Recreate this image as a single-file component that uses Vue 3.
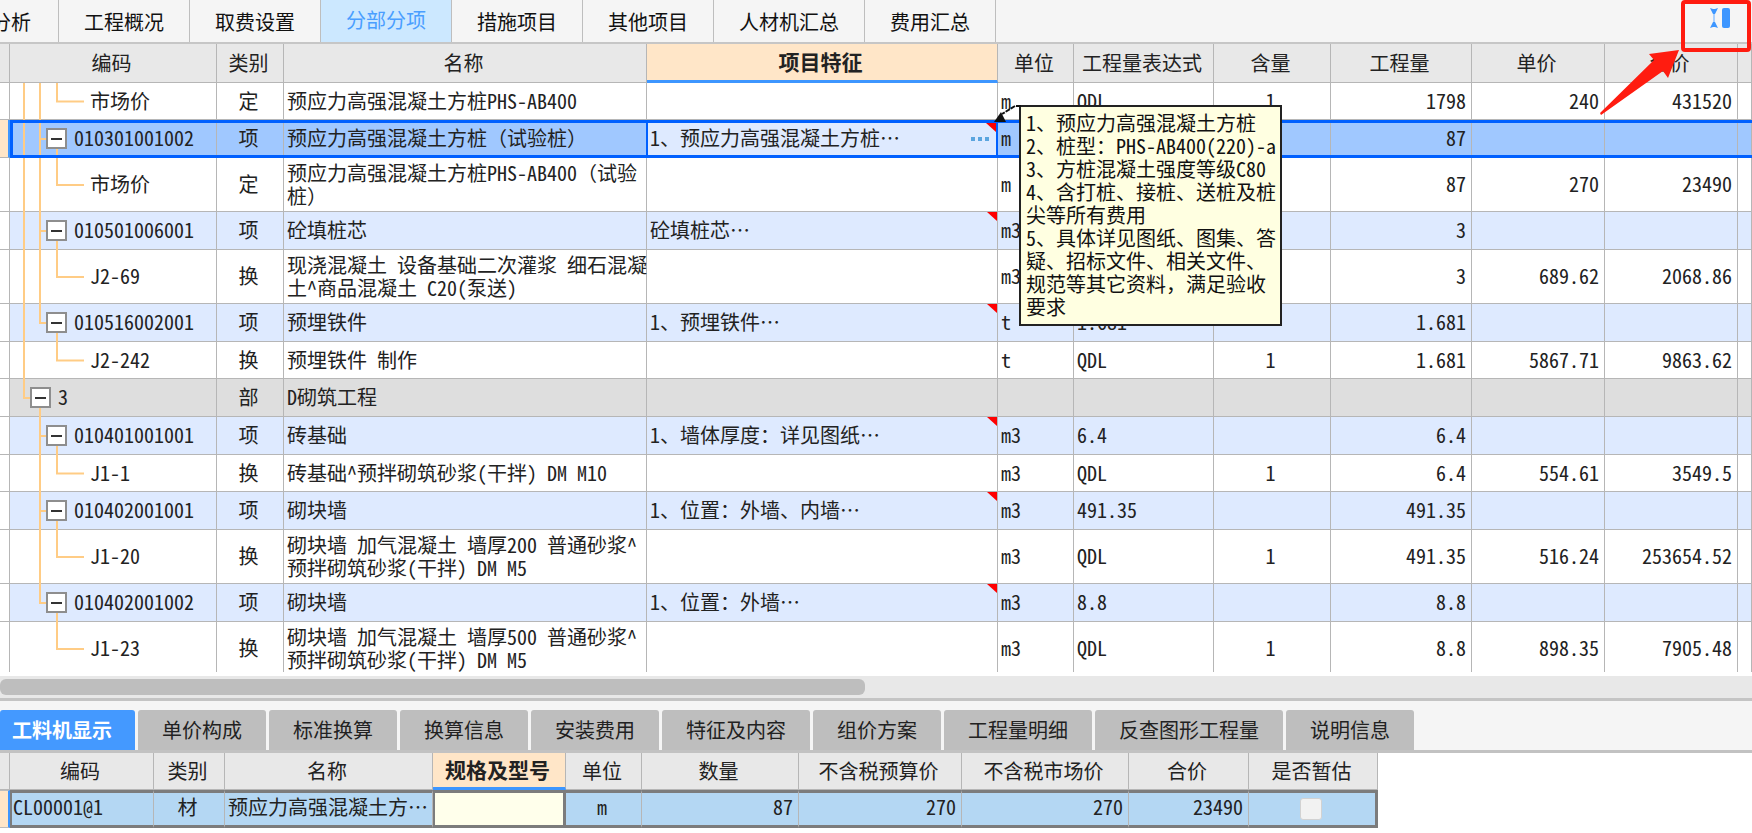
<script setup>
import { ref } from 'vue'

const topTabs = ['工程概况', '取费设置', '分部分项', '措施项目', '其他项目', '人材机汇总', '费用汇总']
const activeTop = ref('分部分项')

const columns = [
  { label: '编码', cls: 'w-code' },
  { label: '类别', cls: 'w-kind' },
  { label: '名称', cls: 'w-name' },
  { label: '项目特征', cls: 'w-feature', focus: true },
  { label: '单位', cls: 'w-unit' },
  { label: '工程量表达式', cls: 'w-expr' },
  { label: '含量', cls: 'w-ratio' },
  { label: '工程量', cls: 'w-qty' },
  { label: '单价', cls: 'w-price' },
  { label: '合价', cls: 'w-total' },
]

// a / b: state of the two outer tree guides ('full', 'end', 'start' or none)
const rows = [
  { type: 'leaf', a: 'full', b: 'full', code: '市场价', kind: '定', name: '预应力高强混凝土方桩PHS-AB400', unit: 'm', expr: 'QDL', ratio: '1', qty: '1798', price: '240', total: '431520' },
  { type: 'item', a: 'full', b: 'full', selected: true, code: '010301001002', kind: '项', name: '预应力高强混凝土方桩（试验桩）', feature: '1、预应力高强混凝土方桩…', unit: 'm', qty: '87' },
  { type: 'leaf', tall: true, a: 'full', b: 'full', code: '市场价', kind: '定', name: '预应力高强混凝土方桩PHS-AB400（试验\n桩）', unit: 'm', qty: '87', price: '270', total: '23490' },
  { type: 'item', a: 'full', b: 'full', code: '010501006001', kind: '项', name: '砼填桩芯', feature: '砼填桩芯…', unit: 'm3', qty: '3' },
  { type: 'leaf', tall: true, a: 'full', b: 'full', code: 'J2-69', kind: '换', name: '现浇混凝土 设备基础二次灌浆 细石混凝\n土^商品混凝土 C20(泵送)', unit: 'm3', qty: '3', price: '689.62', total: '2068.86' },
  { type: 'item', a: 'full', b: 'end', code: '010516002001', kind: '项', name: '预埋铁件', feature: '1、预埋铁件…', unit: 't', expr: '1.681', qty: '1.681' },
  { type: 'leaf', a: 'full', code: 'J2-242', kind: '换', name: '预埋铁件 制作', unit: 't', expr: 'QDL', ratio: '1', qty: '1.681', price: '5867.71', total: '9863.62' },
  { type: 'part', a: 'end', b: 'start', code: '3', kind: '部', name: 'D砌筑工程' },
  { type: 'item', b: 'full', code: '010401001001', kind: '项', name: '砖基础', feature: '1、墙体厚度：详见图纸…', unit: 'm3', expr: '6.4', qty: '6.4' },
  { type: 'leaf', b: 'full', code: 'J1-1', kind: '换', name: '砖基础^预拌砌筑砂浆(干拌) DM M10', unit: 'm3', expr: 'QDL', ratio: '1', qty: '6.4', price: '554.61', total: '3549.5' },
  { type: 'item', b: 'full', code: '010402001001', kind: '项', name: '砌块墙', feature: '1、位置：外墙、内墙…', unit: 'm3', expr: '491.35', qty: '491.35' },
  { type: 'leaf', tall: true, b: 'full', code: 'J1-20', kind: '换', name: '砌块墙 加气混凝土 墙厚200 普通砂浆^\n预拌砌筑砂浆(干拌) DM M5', unit: 'm3', expr: 'QDL', ratio: '1', qty: '491.35', price: '516.24', total: '253654.52' },
  { type: 'item', b: 'end', code: '010402001002', kind: '项', name: '砌块墙', feature: '1、位置：外墙…', unit: 'm3', expr: '8.8', qty: '8.8' },
  { type: 'leaf', tall: true, code: 'J1-23', kind: '换', name: '砌块墙 加气混凝土 墙厚500 普通砂浆^\n预拌砌筑砂浆(干拌) DM M5', unit: 'm3', expr: 'QDL', ratio: '1', qty: '8.8', price: '898.35', total: '7905.48' },
]

const tip = [
  '1、预应力高强混凝土方桩',
  '2、桩型：PHS-AB400(220)-a',
  '3、方桩混凝土强度等级C80',
  '4、含打桩、接桩、送桩及桩',
  '尖等所有费用',
  '5、具体详见图纸、图集、答',
  '疑、招标文件、相关文件、',
  '规范等其它资料，满足验收',
  '要求',
].join('\n')

const detailTabs = ['工料机显示', '单价构成', '标准换算', '换算信息', '安装费用', '特征及内容', '组价方案', '工程量明细', '反查图形工程量', '说明信息']
const activeDetail = ref('工料机显示')
const spec = ref('')
const estimated = ref(false)
</script>

<template>
  <div class="app">
    <nav class="top-tabs">
      <button type="button" class="top-tab first">分析</button>
      <button
        v-for="t in topTabs"
        :key="t"
        type="button"
        class="top-tab"
        :class="{ active: t === activeTop }"
        @click="activeTop = t"
      >{{ t }}</button>
      <button type="button" class="layout-btn" aria-label="切换布局">
        <svg width="22" height="20" viewBox="0 0 22 20">
          <rect x="3" y="5" width="2" height="10" fill="#a9d0ff" />
          <path d="M0 0 L3 1 H5 L8 0 L5 6 H3 Z M0 20 L3 19 H5 L8 20 L5 14 H3 Z" fill="#3d96ff" />
          <rect x="12" y="0" width="8" height="20" rx="2" fill="#3d96ff" />
        </svg>
      </button>
    </nav>

    <div class="grid-view">
      <table class="grid main-grid">
        <colgroup>
          <col class="w-gutter">
          <col v-for="c in columns" :key="c.label" :class="c.cls">
          <col>
        </colgroup>
        <thead>
          <tr>
            <th></th>
            <th v-for="c in columns" :key="c.label" :class="{ focus: c.focus }">{{ c.label }}</th>
            <th></th>
          </tr>
        </thead>
        <tbody>
          <tr v-for="(r, i) in rows" :key="i" :class="[r.type, { tall: r.tall, selected: r.selected }]">
            <td class="gutter"></td>
            <td class="code">
              <svg class="guides" stroke="#ffcc85" stroke-width="2" aria-hidden="true">
                <line v-if="r.a" x1="14" y1="0" x2="14" :y2="r.a === 'full' ? '100%' : '50%'" />
                <line v-if="r.a === 'end'" x1="13" y1="50%" x2="22" y2="50%" />
                <line v-if="r.b" x1="30" :y1="r.b === 'start' ? '50%' : '0'" x2="30" :y2="r.b === 'end' ? '50%' : '100%'" />
                <line v-if="r.type === 'item'" x1="29" y1="50%" x2="38" y2="50%" />
                <line v-if="r.type === 'item'" x1="47" y1="50%" x2="47" y2="100%" />
                <line v-if="r.type === 'leaf'" x1="47" y1="0" x2="47" y2="50%" />
                <line v-if="r.type === 'leaf'" x1="46" y1="50%" x2="74" y2="50%" />
              </svg>
              <div class="code-line">
                <button v-if="r.type !== 'leaf'" type="button" class="toggle" aria-label="折叠"></button>
                <span>{{ r.code }}</span>
              </div>
            </td>
            <td class="mid">{{ r.kind }}</td>
            <td class="text">{{ r.name }}</td>
            <td class="text feature">
              {{ r.feature }}
              <svg v-if="r.feature" class="corner" width="10" height="9" viewBox="0 0 10 9" aria-hidden="true">
                <path d="M0 0 H10 V9 Z" fill="#ff0000" />
              </svg>
              <template v-if="r.selected">
                <button type="button" class="more" aria-label="编辑项目特征">
                  <svg width="18" height="4" viewBox="0 0 18 4">
                    <path d="M0 0h4v4H0z M7 0h4v4H7z M14 0h4v4h-4z" fill="#5ba5df" />
                  </svg>
                </button>
                <svg class="leader" width="28" height="20" viewBox="0 0 28 20" aria-hidden="true">
                  <path d="M27 2 H21 L8 10" fill="none" stroke="#111" stroke-width="2" stroke-dasharray="5 1" />
                  <path d="M7 8 L11 16 L12 18 H0 Z" fill="#111" />
                </svg>
                <div class="tip" role="tooltip">{{ tip }}</div>
              </template>
            </td>
            <td class="text">{{ r.unit }}</td>
            <td class="text">{{ r.expr }}</td>
            <td class="mid">{{ r.ratio }}</td>
            <td class="num">{{ r.qty }}</td>
            <td class="num">{{ r.price }}</td>
            <td class="num">{{ r.total }}</td>
            <td></td>
          </tr>
        </tbody>
      </table>
    </div>

    <div class="scroll-track"><div class="scroll-thumb"></div></div>

    <nav class="detail-tabs">
      <button
        v-for="t in detailTabs"
        :key="t"
        type="button"
        class="detail-tab"
        :class="{ active: t === activeDetail }"
        @click="activeDetail = t"
      >{{ t }}</button>
    </nav>

    <div class="detail-view">
      <table class="grid detail-grid">
        <colgroup>
          <col class="w-gutter"><col class="d-code"><col class="d-kind"><col class="d-name"><col class="d-spec">
          <col class="d-unit"><col class="d-qty"><col class="d-budget"><col class="d-market"><col class="d-total"><col class="d-flag">
        </colgroup>
        <thead>
          <tr>
            <th></th><th>编码</th><th>类别</th><th>名称</th><th id="spec-head" class="focus">规格及型号</th>
            <th>单位</th><th>数量</th><th>不含税预算价</th><th>不含税市场价</th><th>合价</th><th id="flag-head">是否暂估</th>
          </tr>
        </thead>
        <tbody>
          <tr>
            <td class="gutter"></td>
            <td class="text edge-left">CL00001@1</td>
            <td class="mid">材</td>
            <td class="text">预应力高强混凝土方…</td>
            <td class="spec"><input v-model="spec" type="text" aria-labelledby="spec-head"></td>
            <td class="mid">m</td>
            <td class="num">87</td>
            <td class="num">270</td>
            <td class="num">270</td>
            <td class="num">23490</td>
            <td class="mid edge-right"><input v-model="estimated" type="checkbox" aria-labelledby="flag-head"></td>
          </tr>
        </tbody>
      </table>
    </div>

    <svg class="callout" width="160" height="120" viewBox="0 0 160 120" aria-hidden="true">
      <rect x="91" y="2" width="66" height="48" rx="2" fill="none" stroke="#ff1c10" stroke-width="4" />
      <path d="M87 50 L57 54 L62 60 L8 113 L9 115 L71 71 L76 78 Z" fill="#ff1c10" />
    </svg>
  </div>
</template>

<style>
body {
  background: #fff;
}
</style>

<style scoped>
.app {
  position: relative;
  display: flex;
  flex-direction: column;
  height: 100vh;
  overflow: hidden;
  font-family: "Noto Sans Mono CJK SC", "Noto Sans CJK SC", "Liberation Mono", monospace;
  font-size: 20px;
  line-height: 23px;
  color: #222;
}

button,
input {
  margin: 0;
  padding: 0;
  border: 0;
  font: inherit;
  color: inherit;
  box-sizing: border-box;
}

.top-tabs {
  display: flex;
  flex: none;
  height: 42px;
  background: #f5f5f5;
  border-bottom: 2px solid #c6c6c6;
}

.top-tab {
  flex: none;
  display: flex;
  align-items: center;
  justify-content: center;
  padding: 0 25px;
  background: transparent;
  border-right: 1px solid #bebebe;
  white-space: nowrap;
  color: #111;
}

.top-tab.first {
  width: 59px;
  padding: 0 27px 0 0;
  justify-content: flex-end;
  overflow: hidden;
}

.top-tab.active {
  background: #cce8ff;
  color: #4a9eff;
  padding-bottom: 3px;
}

.layout-btn {
  display: flex;
  align-items: center;
  margin-left: auto;
  margin-right: 20px;
  padding-bottom: 6px;
  background: transparent;
}

.grid-view {
  flex: 1;
  min-height: 0;
  overflow: hidden;
  border-bottom: 4px solid #fff;
}

.grid {
  table-layout: fixed;
  border-collapse: separate;
  border-spacing: 0;
}

.main-grid { width: 100%; }
.detail-grid { width: 1378px; }

.w-gutter { width: 10px; }
.w-code { width: 207px; }
.w-kind { width: 67px; }
.w-name { width: 363px; }
.w-feature { width: 351px; }
.w-unit { width: 76px; }
.w-expr { width: 140px; }
.w-ratio { width: 117px; }
.w-qty { width: 141px; }
.w-price { width: 133px; }
.w-total { width: 133px; }

.d-code { width: 144px; }
.d-kind { width: 71px; }
.d-name { width: 208px; }
.d-spec { width: 133px; }
.d-unit { width: 76px; }
.d-qty { width: 157px; }
.d-budget { width: 163px; }
.d-market { width: 167px; }
.d-total { width: 120px; }
.d-flag { width: 129px; }

th,
td {
  box-sizing: border-box;
  position: relative;
  padding: 0 0 2px;
  border-right: 1px solid #b6b6b6;
  border-bottom: 1px solid #b6b6b6;
  white-space: nowrap;
}

th {
  height: 39px;
  padding-right: 3px;
  background: #e8e8e8;
  font-weight: 400;
}

th.focus {
  background: #ffe6c8;
  border-bottom: 3px solid #3d96ff;
  font-size: 21px;
  font-weight: 700;
}

.leaf td { height: 37px; }
.item td,
.part td { height: 38px; }
.tall td { height: 54px; }

.item td:not(.gutter) { background: #deeaff; }
.part td:not(.gutter) { background: #dedede; }

.mid {
  text-align: center;
  padding-right: 3px;
}

.num {
  text-align: right;
  padding-right: 5px;
}

.text {
  padding-left: 3px;
  white-space: pre;
}

.feature { white-space: nowrap; }

.guides {
  position: absolute;
  left: 0;
  top: 0;
  width: 100%;
  height: calc(100% + 1px);
}

.code { padding-bottom: 0; }

.code-line {
  position: relative;
  display: flex;
  align-items: center;
  gap: 7px;
}

.code-line span { padding-bottom: 2px; }

.leaf .code-line { padding-left: 80px; }
.item .code-line { padding-left: 36px; }
.part .code-line { padding-left: 20px; }

.toggle {
  display: flex;
  align-items: center;
  justify-content: center;
  width: 21px;
  height: 21px;
  background: #fff;
  border: 2px solid #8e8e8e;
}

.toggle::before {
  content: "";
  width: 11px;
  height: 2px;
  background: #333;
}

.corner {
  position: absolute;
  top: 0;
  right: 0;
}

.main-grid .selected td:not(.gutter) { background: #a0c8ff; }
.main-grid .selected td.feature { background: #deeaff; }

.selected td:not(.gutter)::after {
  content: "";
  position: absolute;
  inset: 0 -1px -1px 0;
  border: solid #0060ff;
  border-width: 3px 0;
  pointer-events: none;
}

.selected td.code::after { border-left-width: 3px; }

.selected td.feature::after {
  left: -1px;
  border-width: 3px 2px;
}

.selected .corner { top: 3px; right: 1px; }

.selected .gutter,
.detail-grid .gutter {
  background: #ffe6c8;
  border-right: 2px solid #3d96ff;
}

.more {
  position: absolute;
  right: 8px;
  top: 3px;
  bottom: 3px;
  display: flex;
  align-items: center;
  background: transparent;
}

.leader {
  position: absolute;
  left: calc(100% - 3px);
  top: -16px;
  z-index: 4;
}

.tip {
  position: absolute;
  left: calc(100% + 22px);
  top: -15px;
  z-index: 3;
  box-sizing: border-box;
  width: 263px;
  padding: 4px 0 6px 5px;
  background: #ffffe1;
  border: 2px solid #222;
  color: #111;
  white-space: pre;
}

.scroll-track {
  flex: none;
  padding: 3px 0;
  background: #e8e8e8;
  border-bottom: 3px solid #c4c4c4;
}

.scroll-thumb {
  width: 865px;
  height: 16px;
  border-radius: 6px;
  background: #bebebe;
}

.detail-tabs {
  display: flex;
  flex: none;
  gap: 3px;
  height: 40px;
  padding-top: 9px;
  background: #f5f5f5;
  border-bottom: 3px solid #c2c2c2;
}

.detail-tab {
  flex: none;
  padding: 0 24px 2px;
  border-radius: 3px 3px 0 0;
  background: #bebebe;
  white-space: nowrap;
}

.detail-tab.active {
  padding: 0 23px 2px 12px;
  background: #4499ff;
  color: #fff;
  font-weight: 700;
}

.detail-view {
  flex: none;
  padding-bottom: 5px;
  background: #fff;
}

.detail-grid th { height: 37px; }

.detail-grid td {
  height: 38px;
  padding-bottom: 5px;
  background: #b4d7f3;
  border-top: 3px solid #7c7c7c;
  border-bottom: 3px solid #7c7c7c;
}

.detail-grid td.gutter {
  border-top: 1px solid #bcbcbc;
  border-bottom: 1px solid #bcbcbc;
}

.detail-grid .edge-left { border-left: 2px solid #7c7c7c; padding-left: 1px; }
.detail-grid .edge-right { padding-bottom: 0; border-right: 3px solid #7c7c7c; }

.detail-grid .spec {
  padding: 0;
  border-left: 2px solid #7c7c7c;
  border-right: 3px solid #7c7c7c;
}

.spec input {
  display: block;
  width: 100%;
  height: 32px;
  padding: 0 4px;
  background: #ffffeb;
}

input[type="checkbox"] {
  appearance: none;
  display: block;
  width: 22px;
  height: 22px;
  margin: 0 auto;
  background: #f2f2f2;
  border: 1px solid #d2d2d2;
  border-radius: 3px;
}

.callout {
  position: absolute;
  top: 0;
  right: 0;
  z-index: 6;
  pointer-events: none;
}
</style>
